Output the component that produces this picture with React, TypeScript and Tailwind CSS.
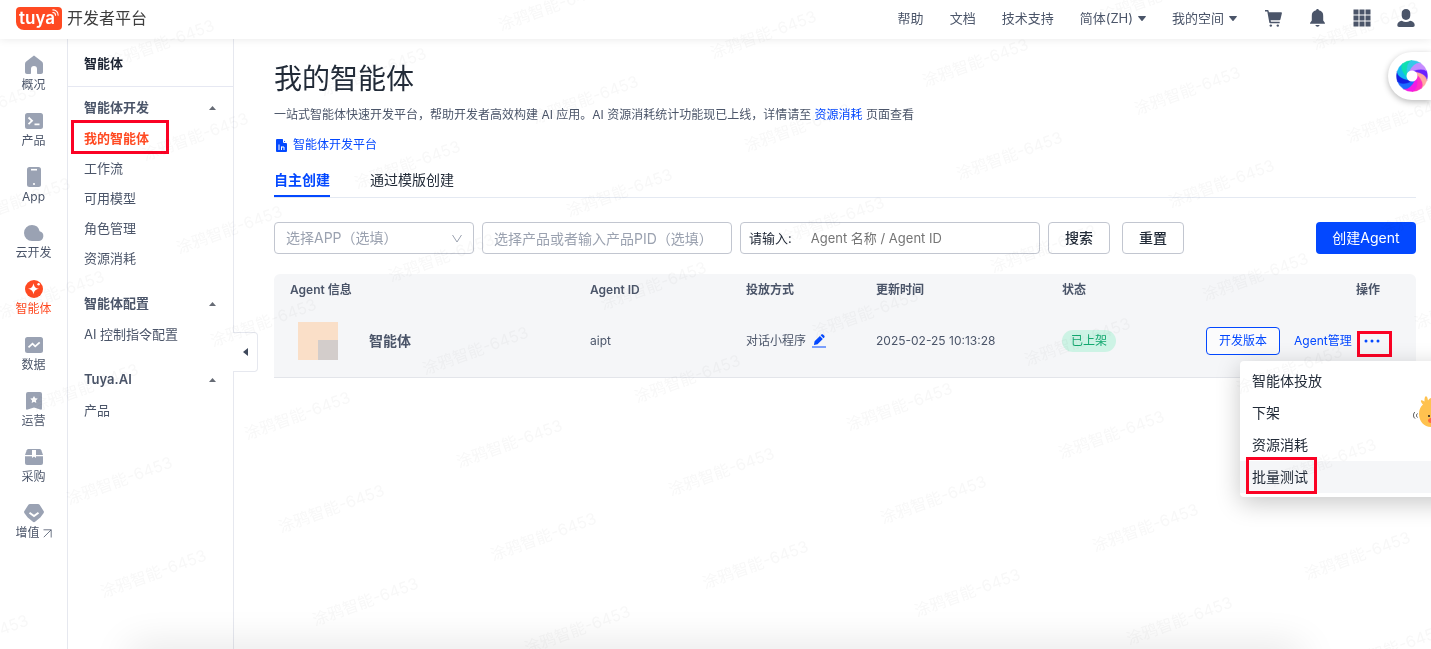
import type { ReactNode } from "react";

const ink = "text-[#4b5569]";

function CaretUp() {
  return (
    <svg width="7" height="4" viewBox="0 0 7 4" className="fill-[#666b75]" aria-hidden="true">
      <path d="M3.5 0 7 4H0z" />
    </svg>
  );
}

function CaretDown() {
  return (
    <svg width="8" height="5" viewBox="0 0 8 5" className="fill-[#4b5569]" aria-hidden="true">
      <path d="M.6 0h6.8c.5 0 .7.5.4.8L4.5 4.7a.6.6 0 0 1-1 0L.2.8C-.1.5.1 0 .6 0z" />
    </svg>
  );
}

function Logo() {
  return (
    <a href="#home" className="flex items-center gap-[5px]">
      <span className="relative flex h-[23px] w-[46px] items-center justify-center rounded-[4px] rounded-bl-[8px] bg-[#ff4a22]">
        <span className="pr-1 pb-px text-[17px] leading-5 font-semibold text-white">tuya</span>
        <svg viewBox="0 0 8 8" className="absolute top-[2px] right-[3px] size-[7px]" fill="none" stroke="#fff" strokeWidth="1.2" strokeLinecap="round" aria-hidden="true">
          <path d="M1 1C4.600 1 7 3.400 7 7M1 4C3 4 4 5 4 7" />
        </svg>
      </span>
      <span className="text-base leading-6 text-[#3d3d3d]">开发者平台</span>
    </a>
  );
}

type RailItem = { label: string; icon: ReactNode; active?: boolean; external?: boolean };

const rail: RailItem[] = [
  {
    label: "概况",
    icon: <path d="M9.300.9 2.200 6.500C1.400 7.200 1 7.900 1 8.900V17c0 1.200.8 2 2 2h3.200c.5 0 .8-.3.8-.8V14a3 3 0 0 1 6 0v4.200c0 .5.3.8.8.8H17c1.200 0 2-.8 2-2V8.900c0-1-.4-1.700-1.200-2.400L10.700.9a1.100 1.100 0 0 0-1.400 0z" />,
  },
  {
    label: "产品",
    icon: (
      <>
        <rect x="1" y="2" width="18" height="16" rx="2.500" />
        <path d="M4.500 6.500 8 9.800 4.500 13.100M10.500 13.300h5" fill="none" stroke="#fff" strokeWidth="1.800" />
      </>
    ),
  },
  {
    label: "App",
    icon: (
      <>
        <rect x="3" y="0" width="14" height="20" rx="2.500" />
        <path d="M7 2.700h6" stroke="#fff" strokeWidth="1.600" />
        <circle cx="10" cy="17" r="1.100" fill="#fff" />
      </>
    ),
  },
  {
    label: "云开发",
    icon: <path d="M8 2a8 8 0 0 1 7.600 6.200A5 5 0 0 1 15 18H8A8 8 0 0 1 8 2z" />,
  },
  {
    label: "智能体",
    active: true,
    icon: (
      <>
        <circle cx="10" cy="10" r="9" />
        <path d="M9.500 4.200c.8 3.700 1.800 4.800 5.500 5.600-3.700.9-4.700 1.900-5.500 5.600-.8-3.700-1.800-4.700-5.500-5.600 3.700-.8 4.700-1.900 5.500-5.600z" fill="#fff" />
        <circle cx="14.600" cy="5.300" r="1.200" fill="#fff" />
      </>
    ),
  },
  {
    label: "数据",
    icon: (
      <>
        <rect x="1" y="2" width="18" height="16" rx="2.500" />
        <path d="M4.500 12.300 8.500 8.700l2.700 2.600 4.500-4" fill="none" stroke="#fff" strokeWidth="1.800" />
      </>
    ),
  },
  {
    label: "运营",
    icon: (
      <>
        <path d="M4 1h12a2 2 0 0 1 2 2v14.500c0 1-.8 1.500-1.700 1.100L10 16.500l-6.300 2.100c-.9.400-1.700-.1-1.700-1.100V3a2 2 0 0 1 2-2z" />
        <path d="m10 5 1.200 2.300 2.500.3-1.800 1.800.4 2.500-2.300-1.200-2.300 1.200.4-2.500-1.800-1.800 2.500-.3z" fill="#fff" />
      </>
    ),
  },
  {
    label: "采购",
    icon: (
      <>
        <path d="M4.500 2h11c.8 0 1.400.4 1.800 1.200L19 8H1l1.700-4.800C3.100 2.400 3.700 2 4.500 2z" />
        <path d="M1 9.200h18V16a2 2 0 0 1-2 2H3a2 2 0 0 1-2-2z" />
        <path d="M8 3h4v8l-2-1.400L8 11z" fill="#fff" />
      </>
    ),
  },
  {
    label: "增值",
    external: true,
    icon: (
      <>
        <path d="M6 1h8c.7 0 1.200.3 1.600.8l4 6.200c.5.700.5 1.500-.1 2.200l-3.200 4.300-4.900 4.100a2.200 2.200 0 0 1-2.800 0l-4.900-4.100L.5 10.200C-.1 9.500-.1 8.700.4 8l4-6.200C4.800 1.300 5.300 1 6 1z" />
        <path d="M5.500 9.800 10 13l4.500-3.200" fill="none" stroke="#fff" strokeWidth="2" />
      </>
    ),
  },
];

function Rail() {
  return (
    <nav aria-label="主导航" className="w-[68px] shrink-0 border-r border-[#e6e8ef] pt-4">
      {rail.map((item) => (
        <a
          key={item.label}
          href="#rail"
          className={`flex h-14 flex-col items-center gap-[2px] text-xs leading-4 ${item.active ? "text-[#ff4a22]" : ink}`}
        >
          <svg viewBox="0 0 20 20" className={`size-5 ${item.active ? "fill-[#ff4a22]" : "fill-[#9aa2b3]"}`} aria-hidden="true">
            {item.icon}
          </svg>
          <span className="flex items-center gap-[3px]">
            {item.label}
            {item.external && (
              <svg viewBox="0 0 9 9" className="size-[9px]" fill="none" stroke="#4b5569" aria-hidden="true">
                <path d="M.5.8h7.700v7.700M8.200.8.8 8.200" strokeWidth=".8" />
              </svg>
            )}
          </span>
        </a>
      ))}
    </nav>
  );
}

const groups = [
  { title: "智能体开发", items: ["我的智能体", "工作流", "可用模型", "角色管理", "资源消耗"] },
  { title: "智能体配置", items: ["AI 控制指令配置"] },
  { title: "Tuya.AI", items: ["产品"] },
];

function Sidebar() {
  return (
    <aside className="relative w-[166px] shrink-0 border-r border-[#e6e8ef] text-[13px]">
      <h2 className="flex h-12 items-center border-b border-[#e6e8f2] px-4 pt-[2px] font-semibold text-[#1b2332]">智能体</h2>
      <div className="flex flex-col gap-4 pt-[6px]">
        {groups.map((group) => (
          <section key={group.title}>
            <button type="button" className={`flex h-[30px] w-full items-center justify-between pr-[17px] pl-4 font-semibold ${ink}`}>
              {group.title}
              <CaretUp />
            </button>
            <ul>
              {group.items.map((item) => (
                <li key={item} className="relative h-[30px]">
                  {item === "我的智能体" && (
                    <span className="absolute -top-[3px] left-[3px] h-[34px] w-[98px] border-[3px] border-[#fb0224]" />
                  )}
                  <a
                    href="#menu"
                    className={`flex h-full items-center px-4 pt-px ${item === "我的智能体" ? "font-semibold text-[#ff4a22]" : ink}`}
                  >
                    {item}
                  </a>
                </li>
              ))}
            </ul>
          </section>
        ))}
      </div>
      <button
        type="button"
        aria-label="收起"
        className="absolute top-[293px] left-full flex h-10 w-[25px] items-center justify-center rounded-r-[4px] border border-l-0 border-[#e6e8ef] bg-white"
      >
        <svg viewBox="0 0 5 8" className="h-2 w-[5px] fill-[#3f495c]" aria-hidden="true">
          <path d="M5 0v8L0 4z" />
        </svg>
      </button>
    </aside>
  );
}

function TopIcon({ label, children }: { label: string; children: ReactNode }) {
  return (
    <button type="button" aria-label={label}>
      <svg viewBox="0 0 18 18" className="size-[18px] fill-[#4b5569]" aria-hidden="true">
        {children}
      </svg>
    </button>
  );
}

function Header() {
  return (
    <header className="relative z-10 flex h-[39px] shrink-0 items-center justify-between bg-white pr-4 pb-[3px] pl-4 shadow-[0_1px_8px_rgba(0,0,0,0.08)]">
      <Logo />
      <div className={`flex items-center text-[13px] ${ink}`}>
        <nav aria-label="顶部" className="flex items-center gap-[26px] pt-px">
          <a href="#help">帮助</a>
          <a href="#docs">文档</a>
          <a href="#support">技术支持</a>
          <button type="button" className="flex items-center gap-[5px]">
            简体(ZH)
            <CaretDown />
          </button>
          <button type="button" className="flex items-center gap-[5px]">
            我的空间
            <CaretDown />
          </button>
        </nav>
        <div className="flex items-center gap-[26px] pl-7">
          <TopIcon label="购物车">
            <path d="M0 1h2.600c.6 0 .9.300 1 .8l.3 1.500H16.200c.5 0 .8.400.7.900l-1.500 6.300c-.1.500-.5.800-1 .8H5.600l.3 1.500h8.800V14.300H5.300c-.6 0-.9-.3-1-.8L2.300 2.600H0z" />
            <circle cx="5.800" cy="16.600" r="1.200" />
            <circle cx="12.800" cy="16.600" r="1.200" />
          </TopIcon>
          <TopIcon label="通知">
            <path d="M8.500 0c.8 0 1.400.6 1.400 1.300A5.600 5.600 0 0 1 14.200 7v4.500l1.600 2.200c.4.600.2 1-.5 1H1.700c-.7 0-.9-.4-.5-1l1.600-2.200V7a5.600 5.600 0 0 1 4.300-5.700C7.100.6 7.700 0 8.500 0zM6.300 16h4.400a2.300 2.300 0 0 1-4.400 0z" />
          </TopIcon>
          <TopIcon label="应用">
            {[0, 6, 12].map((y) => [0, 6, 12].map((x) => <rect key={`${x}-${y}`} x={x + 0.5} y={y + 0.5} width="5" height="5" />))}
          </TopIcon>
          <TopIcon label="账号">
            <path d="M9 0c2.600 0 4.300 1.900 4.300 4.300v2.300C13.300 9.200 11.600 11 9 11S4.700 9.200 4.700 6.600V4.300C4.700 1.900 6.400 0 9 0zM4.800 11.800a8 8 0 0 0 8.400 0c2.600.5 4.500 2 4.500 4.200 0 1.200-.6 2-1.800 2H2.100C.9 18 .3 17.200.3 16c0-2.200 1.900-3.700 4.500-4.200z" />
          </TopIcon>
        </div>
      </div>
    </header>
  );
}

function Filters() {
  const box = "h-8 rounded-[4px] border border-[#c2c6d0] bg-white text-sm";
  return (
    <form className="mt-6 flex items-center" onSubmit={(e) => e.preventDefault()}>
      <div className="relative w-[200px]">
        <select aria-label="选择APP" defaultValue="" className={`${box} w-full appearance-none pr-8 pl-[11px] text-[#9ba2b0]`}>
          <option value="">选择APP（选填）</option>
        </select>
        <svg viewBox="0 0 10 9" className="pointer-events-none absolute top-3 right-3 h-[9px] w-[10px]" fill="none" stroke="#9ba2b0" aria-hidden="true">
          <path d="M.5 1 5 8l4.500-7" />
        </svg>
      </div>
      <input
        aria-label="选择产品"
        placeholder="选择产品或者输入产品PID（选填）"
        className={`${box} ml-2 w-[250px] px-[11px] placeholder:text-[#9ba2b0]`}
      />
      <div className={`${box} ml-2 flex w-[300px] items-center px-2`}>
        <label htmlFor="agent" className="text-[13px] text-[#1b2332]">
          请输入:
        </label>
        <input
          id="agent"
          placeholder="Agent 名称 / Agent ID"
          className="ml-[19px] min-w-0 flex-1 text-[13px] outline-none placeholder:text-[#757575]"
        />
      </div>
      <button type="submit" className={`${box} ml-2 w-[62px] font-medium text-[#222b38]`}>
        搜索
      </button>
      <button type="reset" className={`${box} ml-3 w-[62px] font-medium text-[#222b38]`}>
        重置
      </button>
      <button type="button" className="ml-auto h-8 w-[100px] rounded-[4px] bg-[#0348ff] text-sm text-white">
        创建Agent
      </button>
    </form>
  );
}

const menu = ["智能体投放", "下架", "资源消耗", "批量测试"];

function Actions() {
  return (
    <div className="relative flex items-center text-[#0348ff]">
      <button type="button" className="h-7 w-[74px] rounded-[4px] border border-[#0348ff] bg-white/60">
        开发版本
      </button>
      <a href="#manage" className="ml-[14px] whitespace-nowrap">
        Agent管理
      </a>
      <span className="absolute top-1 left-[151px] h-[26px] w-[35px] border-[3px] border-[#fb0224]" />
      <button type="button" aria-label="更多" className="absolute left-[158px]">
        <svg viewBox="0 0 16 4" className="h-1 w-4 fill-[#0348ff]" aria-hidden="true">
          <circle cx="2" cy="2" r="1.500" />
          <circle cx="8" cy="2" r="1.500" />
          <circle cx="14" cy="2" r="1.500" />
        </svg>
      </button>
      <ul className="absolute top-[34px] left-[34px] z-20 w-[220px] rounded-[4px] bg-white py-1 text-sm text-[#222b38] shadow-[0_6px_24px_rgba(0,0,0,0.22)]">
        {menu.map((item) => (
          <li key={item} className={`relative h-8 ${item === "批量测试" ? "bg-[#f5f6f8]" : ""}`}>
            <button type="button" className="h-full w-full px-3 text-left">
              {item}
            </button>
            {item === "批量测试" && (
              <span className="pointer-events-none absolute -top-1 left-[6px] h-[37px] w-[71px] border-[3px] border-[#fb0224]" />
            )}
          </li>
        ))}
      </ul>
    </div>
  );
}

function AgentTable() {
  const head = "pt-px pl-4 font-semibold";
  const cell = "pt-[2px] pl-4";
  return (
    <table className={`mt-5 w-full table-fixed text-left text-xs ${ink}`}>
      <colgroup>
        <col className="w-[300px]" />
        <col className="w-[156px]" />
        <col className="w-[130px]" />
        <col className="w-[186px]" />
        <col />
        <col className="w-[226px]" />
      </colgroup>
      <thead>
        <tr className="h-[30px] bg-[#f5f6f8]">
          <th className={`${head} rounded-tl-[6px]`}>Agent 信息</th>
          <th className={head}>Agent ID</th>
          <th className={head}>投放方式</th>
          <th className={head}>更新时间</th>
          <th className={head}>状态</th>
          <th className={`${head} rounded-tr-[6px] pr-9 text-right`}>操作</th>
        </tr>
      </thead>
      <tbody>
        <tr className="h-[73px] border-b border-[#e3e5ea] bg-[#f5f6f8]">
          <td className="pt-[2px] pl-6">
            <div className="flex items-center">
              <span className="flex h-[38px] w-10 items-end justify-end bg-[#fadfc8]">
                <span className="size-5 bg-[#d3cdcb]" />
              </span>
              <span className="ml-[31px] text-sm font-semibold">智能体</span>
            </div>
          </td>
          <td className={cell}>aipt</td>
          <td className={cell}>
            <span className="flex items-center gap-[6px]">
              对话小程序
              <button type="button" aria-label="编辑">
                <svg viewBox="0 0 14 14" className="size-[14px] fill-[#0348ff]" aria-hidden="true">
                  <path d="M8.600 1.300 9.400.5c.5-.5 1.100-.5 1.600 0l1.300 1.300c.5.500.5 1.100 0 1.600l-.8.800zM7.900 2l2.900 2.900-5.300 5.300-3.600.9.700-3.800zM0 12.500h14v1H0z" />
                </svg>
              </button>
            </span>
          </td>
          <td className={cell}>2025-02-25 10:13:28</td>
          <td className={cell}>
            <span className="inline-block rounded-full bg-[#cdf3e5] px-[9px] py-[3px] text-[#13a870]">已上架</span>
          </td>
          <td className={cell}>
            <Actions />
          </td>
        </tr>
      </tbody>
    </table>
  );
}

const blades = ["#6a1fff", "#ffa9a0", "#ff2fc0", "#f21ae6", "#1b6dff", "#1420e0", "#12b8f0", "#0fe0b0", "#35c9e8", "#c58bff"];

function Assistant() {
  return (
    <button
      type="button"
      aria-label="智能助手"
      className="absolute top-[52px] right-0 z-20 flex h-12 w-[43px] items-center rounded-l-full bg-white pl-2 shadow-[0_2px_6px_rgba(0,0,0,0.28)]"
    >
      <svg viewBox="-16 -16 32 32" className="size-8" aria-hidden="true">
        {blades.map((color, i) => (
          <path
            key={color}
            d="M0-5Q10-10 14.600-5.300A15.500 15.500 0 0 1 14.800 4.600Q13.500-.5 3-4Z"
            fill={color}
            stroke={color}
            strokeWidth=".4"
            transform={`rotate(${i * 36})`}
          />
        ))}
        <circle r="5.500" fill="#fff" />
      </svg>
    </button>
  );
}

function Mascot() {
  return (
    <svg viewBox="0 0 19 34" className="absolute top-[395px] right-0 z-30 h-[34px] w-[19px]" aria-hidden="true">
      <path d="M19 7.500V32C12 32 7 26 7 19c0-4 1.500-7.500 4-9.500C9.500 8 8.500 6.500 9 5.500c1-.8 2.500.5 3.500 1 0-2 0-5 1.500-5.200 1.500 0 1.500 2.500 2 4.200C17 4 18 3 19 3z" fill="#ffc24f" />
      <circle cx="17" cy="21" r="1" fill="#1d1d1d" />
      <path d="M16 25c1-1.500 2-2 3-2v5c-2 0-3-1-3-3z" fill="#ff6b3d" />
      <path d="M3 17c-2 1.500-2 5 0 6.500M5.500 18.500c-1.300 1-1.300 3 0 4" fill="none" stroke="#333" strokeWidth=".9" />
    </svg>
  );
}

const marks = Array.from({ length: 13 }, (_, i) => i - 3)
  .flatMap((i) => Array.from({ length: 18 }, (_, j) => j - 6).map((j) => ({ x: 247 + i * 178 + j * 34, y: 440 - i * 65 + j * 93 })))
  .filter(({ x, y }) => x > -90 && x < 1425 && y > 10 && y < 680);

function Watermark() {
  return (
    <svg className="pointer-events-none absolute inset-0 z-40 h-full w-full mix-blend-multiply" aria-hidden="true">
      {marks.map(({ x, y }) => (
        <text key={`${x}:${y}`} transform={`translate(${x} ${y}) rotate(-20)`} fontSize="16" fill="#f8f8f8">
          涂鸦智能-6453
        </text>
      ))}
    </svg>
  );
}

export default function App() {
  return (
    <div className="relative flex min-h-screen flex-col overflow-hidden bg-white font-['Inter','Noto_Sans_CJK_SC',sans-serif]">
      <Header />
      <div className="flex flex-1">
        <Rail />
        <Sidebar />
        <main className={`min-w-0 flex-1 pt-5 pr-[15px] pl-10 text-xs ${ink}`}>
          <h1 className="text-[28px] leading-10 text-[#222b38]">我的智能体</h1>
          <p className="mt-[7px] leading-[18px]">
            一站式智能体快速开发平台，帮助开发者高效构建 AI 应用。AI 资源消耗统计功能现已上线，详情请至{" "}
            <a href="#usage" className="text-[#0348ff]">
              资源消耗
            </a>{" "}
            页面查看
          </p>
          <a href="#platform" className="mt-3 flex items-center gap-[6px] pl-[2px] leading-[18px] text-[#0348ff]">
            <svg viewBox="0 0 11 13" className="h-[13px] w-[11px]" aria-hidden="true">
              <path d="M1 0h5.500L11 4.500V12a1 1 0 0 1-1 1H1a1 1 0 0 1-1-1V1a1 1 0 0 1 1-1z" fill="#0348ff" />
              <path d="M7.500 0 11 3.500H7.500zM3 5.500V11M5.500 7.500V11M5.500 8H8v3" fill="none" stroke="#fff" />
            </svg>
            智能体开发平台
          </a>
          <div role="tablist" className="mt-[15px] flex gap-10 border-b border-[#e4e9f2] text-sm leading-[22px] text-[#222b38]">
            <button type="button" role="tab" aria-selected="true" className="border-b-2 border-[#0348ff] pb-1 font-semibold text-[#0348ff]">
              自主创建
            </button>
            <button type="button" role="tab" aria-selected="false" className="pb-[6px]">
              通过模版创建
            </button>
          </div>
          <Filters />
          <AgentTable />
        </main>
      </div>
      <Assistant />
      <Mascot />
      <div className="pointer-events-none absolute -bottom-6 right-[130px] left-[130px] z-30 h-6 shadow-[0_0_40px_rgba(0,0,0,0.14)]" />
      <Watermark />
    </div>
  );
}
